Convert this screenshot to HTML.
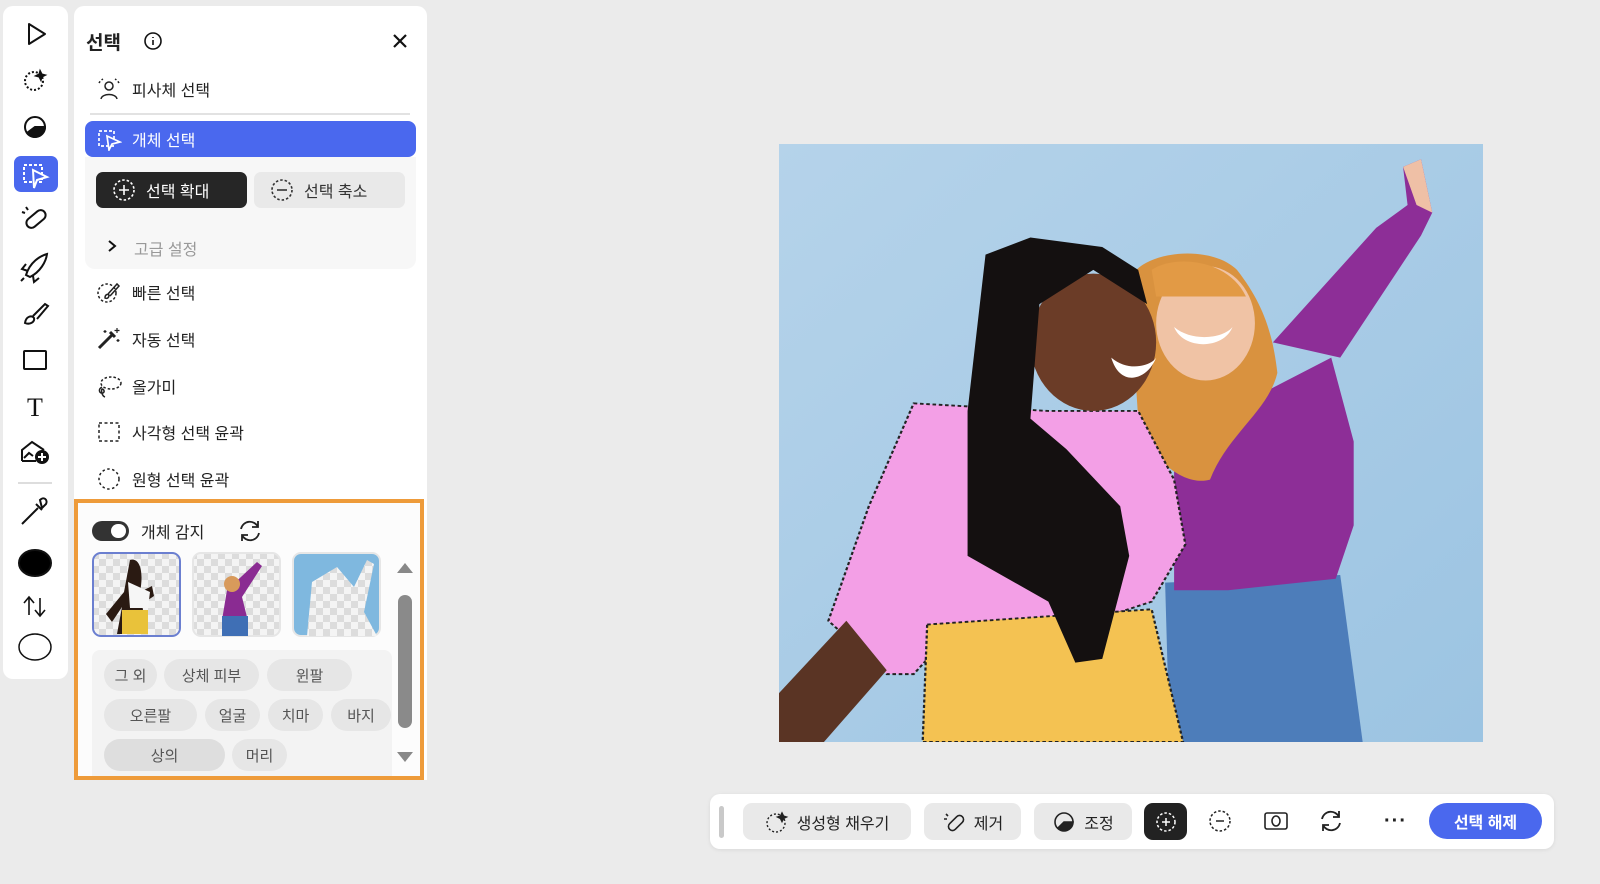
<!DOCTYPE html>
<html><head><meta charset="utf-8"><style>
*{box-sizing:border-box;margin:0;padding:0}
body{width:1600px;height:884px;background:#ebebeb;font-family:"Liberation Sans","Noto Sans CJK KR",sans-serif;position:relative;overflow:hidden;color:#222}
.abs{position:absolute}
.lt{left:3px;top:6px;width:65px;height:673px;background:#fff;border-radius:10px}
.ic{position:absolute;left:20px;width:30px;height:30px;display:flex;align-items:center;justify-content:center}
.panel{left:74px;top:6px;width:353px;height:774px;background:#fff;border-radius:10px 10px 0 0}
.row{position:absolute;left:96px;height:30px;display:flex;align-items:center;font-size:16px;color:#222}
.row svg{margin-right:10px}
.tag{position:absolute;height:32px;border-radius:16px;background:#e6e6e6;font-size:15px;color:#555;display:flex;align-items:center;justify-content:center}
.btn{position:absolute;top:803px;height:37px;border-radius:9px;background:#e9e9e9;display:flex;align-items:center;justify-content:center;font-size:16px;color:#222;gap:8px}
</style></head><body>

<div class="abs lt"></div>
<svg class="abs" style="left:0;top:0" width="74" height="680" fill="none" stroke="#111" stroke-width="2">
<path d="M29 24 L45 34 L29 44 Z" stroke-linejoin="round"/>
<circle cx="34" cy="81" r="9" stroke-dasharray="2 2"/><path d="M40 70 l2 4 4 1 -4 2 -1 4 -2-4 -4-1 4-2z" fill="#111" stroke-width="1"/>
<circle cx="35" cy="127" r="10"/><path d="M27 133 A10 10 0 0 0 45 127 L35 127 Z" fill="#111"/>
<rect x="14" y="156" width="44" height="36" rx="7" fill="#4a68ee" stroke="none"/>
<rect x="24" y="165" width="18" height="17" stroke="#fff" stroke-dasharray="3 2"/><path d="M33 170 L47 177 L37 180 L34 188 Z" stroke="#fff" fill="#4a68ee"/>
<rect x="25" y="214" width="22" height="10" rx="5" transform="rotate(-40 36 219)"/><path d="M26 207 l2 3 M22 212 l3 1"/>
<path d="M26 275 C30 262 40 256 47 254 C46 262 40 272 30 277 Z M28 271 l-6 -2 l4 -5 M33 276 l1 6 l5 -4 M24 278 l-3 3"/>
<path d="M25 323 C26 316 32 315 34 318 C35 322 30 325 25 323 Z M33 316 L45 304 L48 306 L37 319"/>
<rect x="24" y="351" width="22" height="18" rx="1"/>
<text x="35" y="416" font-family="Liberation Serif" font-size="26" fill="#111" stroke="none" text-anchor="middle">T</text>
<path d="M22 461 V450 L32 442 L44 450 M22 461 H36 M24 458 l5-5 4 3"/><circle cx="42" cy="457" r="6" fill="#111"/><path d="M42 453 v8 M38 457 h8" stroke="#fff"/>
<path d="M18 483 H52" stroke="#ddd"/>
<path d="M24 522 L38 508 M36 504 l6 6 M40 500 C44 496 48 500 46 504 L42 508 Z M24 522 l-2 2"/>
<ellipse cx="35" cy="563" rx="16" ry="13" fill="#000"/>
<path d="M29 615 V598 M24 603 L29 597 L34 603 M40 598 V615 M35 610 L40 616 L45 610" stroke-width="1.6"/>
<ellipse cx="35" cy="647" rx="16" ry="13" stroke-width="1.5"/>
</svg>

<div class="abs panel"></div>
<div class="abs" style="left:86px;top:28px;font-size:19px;font-weight:bold">선택</div>
<svg class="abs" style="left:143px;top:31px" width="20" height="20" fill="none" stroke="#111" stroke-width="1.6"><circle cx="10" cy="10" r="8"/><path d="M10 9 v5 M10 6 v1"/></svg>
<svg class="abs" style="left:392px;top:33px" width="16" height="16" stroke="#111" stroke-width="2.2"><path d="M2 2 L14 14 M14 2 L2 14"/></svg>

<div class="row" style="top:74px"><svg width="26" height="24" fill="none" stroke="#222" stroke-width="1.5"><circle cx="13" cy="9" r="4"/><path d="M5 22 C6 16 20 16 21 22" /><path d="M3 6 a11 11 0 0 1 4-4 M23 6 a11 11 0 0 0-4-4" stroke-dasharray="2 2"/></svg>피사체 선택</div>
<div class="abs" style="left:90px;top:113px;width:320px;height:2px;background:#e2e2e2"></div>
<div class="abs" style="left:85px;top:121px;width:331px;height:36px;background:#4a68ee;border-radius:8px"></div>
<div class="row" style="top:124px;color:#fff"><svg width="26" height="24" fill="none" stroke="#fff" stroke-width="1.7"><rect x="3" y="4" width="15" height="15" stroke-dasharray="3 2"/><path d="M11 9 L24 15 L16 17 L13 23 Z" fill="#4a68ee"/></svg>개체 선택</div>
<div class="abs" style="left:85px;top:157px;width:331px;height:112px;background:#f7f7f7;border-radius:0 0 10px 10px"></div>
<div class="abs" style="left:96px;top:172px;width:151px;height:36px;background:#262626;border-radius:7px;color:#fff;font-size:16px;display:flex;align-items:center;padding-left:16px;gap:10px"><svg width="24" height="24" fill="none" stroke="#fff" stroke-width="1.6"><circle cx="12" cy="12" r="10" stroke-dasharray="2.5 2"/><path d="M12 7 v10 M7 12 h10"/></svg>선택 확대</div>
<div class="abs" style="left:254px;top:172px;width:151px;height:36px;background:#e9e9e9;border-radius:7px;color:#333;font-size:16px;display:flex;align-items:center;padding-left:16px;gap:10px"><svg width="24" height="24" fill="none" stroke="#333" stroke-width="1.6"><circle cx="12" cy="12" r="10" stroke-dasharray="2.5 2"/><path d="M7 12 h10"/></svg>선택 축소</div>
<svg class="abs" style="left:106px;top:239px" width="12" height="14" fill="none" stroke="#111" stroke-width="2"><path d="M3 2 L9 7 L3 12"/></svg>
<div class="abs" style="left:134px;top:236px;font-size:16px;color:#999">고급 설정</div>

<div class="row" style="top:277px"><svg width="26" height="26" fill="none" stroke="#222" stroke-width="1.5"><circle cx="11" cy="14" r="9" stroke-dasharray="2.5 2"/><path d="M9 19 C9 15 12 15 13 16 C13 19 11 20 9 19 Z M12 15 L21 5 L23 7 L14 17"/></svg>빠른 선택</div>
<div class="row" style="top:324px"><svg width="26" height="26" fill="none" stroke="#222" stroke-width="1.6"><path d="M3 22 L17 8 M14 6 l5 5" stroke-width="3"/><path d="M21 2 v5 M18.5 4.5 h5 M9 4 v3 M7.5 5.5 h3 M22 13 v3 M20.5 14.5 h3" stroke-width="1.2"/></svg>자동 선택</div>
<div class="row" style="top:371px"><svg width="26" height="26" fill="none" stroke="#222" stroke-width="1.5"><ellipse cx="15" cy="10" rx="10" ry="6" stroke-dasharray="2.5 2"/><path d="M6 14 C2 16 3 21 7 20 C9 19 8 16 6 16 C5 18 6 23 9 24"/></svg>올가미</div>
<div class="row" style="top:417px"><svg width="26" height="24" fill="none" stroke="#222" stroke-width="1.5"><rect x="3" y="3" width="20" height="18" stroke-dasharray="3 2.5"/></svg>사각형 선택 윤곽</div>
<div class="row" style="top:464px"><svg width="26" height="26" fill="none" stroke="#222" stroke-width="1.5"><circle cx="13" cy="13" r="10" stroke-dasharray="2.5 2.5"/></svg>원형 선택 윤곽</div>

<div class="abs" style="left:74px;top:499px;width:350px;height:281px;border:4px solid #ee9b3a;background:#fcfcfc"></div>
<div class="abs" style="left:92px;top:521px;width:37px;height:20px;border-radius:10px;background:#333"></div>
<div class="abs" style="left:111px;top:524px;width:15px;height:14px;border-radius:7px;background:#fff"></div>
<div class="abs" style="left:141px;top:519px;font-size:16px;color:#222">개체 감지</div>
<svg class="abs" style="left:236px;top:518px" width="28" height="26" fill="none" stroke="#222" stroke-width="1.8"><path d="M5 11 A9 9 0 0 1 22 9 M22 3 v6 h-6 M23 15 A9 9 0 0 1 6 17 M6 23 v-6 h6"/></svg>
<svg class="abs" style="left:92px;top:552px" width="290" height="86">
<defs><pattern id="ck" width="14" height="14" patternUnits="userSpaceOnUse"><rect width="14" height="14" fill="#f4f4f4"/><rect width="7" height="7" fill="#dcdcdc"/><rect x="7" y="7" width="7" height="7" fill="#dcdcdc"/></pattern></defs>
<rect x="1" y="1" width="87" height="83" rx="8" fill="url(#ck)" stroke="#6b7fd0" stroke-width="2"/>
<path d="M38 8 C48 5 52 20 48 40 L60 34 L62 44 L50 52 L55 82 L25 82 L30 55 L20 70 L14 62 L32 40 Z" fill="#2a1a12"/><rect x="30" y="58" width="26" height="24" fill="#e9c23a"/><path d="M36 30 L58 40 L56 56 L38 56Z" fill="#f6f6f6"/>
<rect x="101" y="1" width="87" height="83" rx="8" fill="url(#ck)" stroke="#e6e6e6" stroke-width="2"/>
<path d="M135 38 L165 10 L170 14 L150 45 L155 65 L130 68 Z" fill="#8a2b92"/><circle cx="140" cy="32" r="8" fill="#d89a5b"/><rect x="130" y="64" width="26" height="20" fill="#3f6fb5"/>
<rect x="201" y="1" width="87" height="83" rx="8" fill="#7fb8df" stroke="#e6e6e6" stroke-width="2"/>
<path d="M215 84 L220 30 L245 15 L262 35 L275 8 L282 12 L272 60 L285 84Z" fill="url(#ck)"/>
</svg>
<div class="abs" style="left:397px;top:563px;width:0;height:0;border-left:8px solid transparent;border-right:8px solid transparent;border-bottom:10px solid #888"></div>
<div class="abs" style="left:398px;top:595px;width:14px;height:133px;border-radius:7px;background:#8a8a8a"></div>
<div class="abs" style="left:397px;top:752px;width:0;height:0;border-left:8px solid transparent;border-right:8px solid transparent;border-top:10px solid #888"></div>
<div class="abs" style="left:92px;top:650px;width:300px;height:126px;background:#f3f3f3;border-radius:8px 8px 0 0"></div>
<div class="tag" style="left:104px;top:659px;width:53px">그 외</div>
<div class="tag" style="left:164px;top:659px;width:95px">상체 피부</div>
<div class="tag" style="left:267px;top:659px;width:85px">윈팔</div>
<div class="tag" style="left:104px;top:699px;width:93px">오른팔</div>
<div class="tag" style="left:205px;top:699px;width:55px">얼굴</div>
<div class="tag" style="left:268px;top:699px;width:55px">치마</div>
<div class="tag" style="left:331px;top:699px;width:60px">바지</div>
<div class="tag" style="left:104px;top:739px;width:121px;background:#dedede">상의</div>
<div class="tag" style="left:232px;top:739px;width:55px">머리</div>

<svg class="abs" style="left:779px;top:144px" width="704" height="598" viewBox="0 0 1568 1568" preserveAspectRatio="none">
<defs><linearGradient id="bg" x1="0" y1="0" x2="1" y2="1"><stop offset="0" stop-color="#b5d3ea"/><stop offset="1" stop-color="#9cc4e2"/></linearGradient></defs>
<rect width="1568" height="1568" fill="url(#bg)"/>
<path d="M1100 520 L1330 220 L1400 160 L1390 60 L1430 40 L1455 180 L1430 240 L1250 560 Z" fill="#8d2e97"/>
<path d="M1390 60 L1430 40 L1455 180 L1420 160 Z" fill="#efc0a6"/>
<path d="M860 1150 L1250 1130 L1300 1568 L870 1568 Z" fill="#4d7dba"/>
<path d="M880 760 L1000 700 L1230 560 L1280 780 L1280 1000 L1240 1140 L1000 1170 L880 1170 Z" fill="#8d2e97"/>
<path d="M780 360 C800 280 960 260 1020 330 C1080 420 1100 500 1110 600 C1090 700 1000 760 960 880 C900 900 820 820 800 720 Z" fill="#d9923f"/>
<ellipse cx="950" cy="470" rx="110" ry="150" fill="#f0c3a5"/>
<path d="M830 330 C880 290 1000 300 1040 400 L840 400 Z" fill="#e29a45"/>
<path d="M300 680 L600 700 L800 700 L880 880 L905 1050 L830 1200 L700 1250 L400 1260 L300 1390 L240 1390 L110 1250 L200 950 Z" fill="#f39fe6" stroke="#222" stroke-width="5" stroke-dasharray="8 6"/>
<path d="M0 1440 L150 1250 L240 1380 L100 1568 L0 1568 Z" fill="#5a3424"/>
<path d="M330 1260 L830 1220 L900 1568 L320 1568 Z" fill="#f4c252" stroke="#222" stroke-width="5" stroke-dasharray="8 6"/>
<ellipse cx="700" cy="520" rx="140" ry="180" fill="#6b3c27"/>
<path d="M460 290 L560 245 L720 270 L800 330 L820 420 L700 330 L580 420 L560 720 L640 800 L760 950 L780 1080 L720 1350 L660 1360 L600 1200 L420 1080 L420 700 Z" fill="#141010"/>
<path d="M740 560 C780 600 830 580 840 560 C820 620 760 640 740 560 Z" fill="#fff"/>
<path d="M880 480 C920 520 990 510 1010 480 C990 540 900 540 880 480 Z" fill="#fff"/>
</svg>

<div class="abs" style="left:710px;top:794px;width:844px;height:55px;background:#fff;border-radius:10px;box-shadow:0 1px 4px rgba(0,0,0,.08)"></div>
<div class="abs" style="left:719px;top:806px;width:5px;height:32px;background:#c9c9c9;border-radius:3px"></div>
<div class="btn" style="left:743px;width:168px"><svg width="24" height="24" fill="none" stroke="#222" stroke-width="1.4"><circle cx="11" cy="13" r="9" stroke-dasharray="2 2"/><path d="M17 3 l1.5 3 3 1 -3 1.5 -1.5 3 -1.5-3 -3-1.5 3-1z" fill="#222"/></svg>생성형 채우기</div>
<div class="btn" style="left:924px;width:97px"><svg width="24" height="24" fill="none" stroke="#222" stroke-width="1.6"><rect x="5" y="9" width="18" height="8" rx="4" transform="rotate(-45 14 13)"/><path d="M4 4 l2 2 M2 9 h3"/></svg>제거</div>
<div class="btn" style="left:1034px;width:98px"><svg width="24" height="24" fill="none" stroke="#222" stroke-width="1.6"><circle cx="12" cy="12" r="9"/><path d="M6 18 A9 9 0 0 0 21 12 L12 12 Z" fill="#222"/></svg>조정</div>
<div class="btn" style="left:1144px;width:43px;background:#222"><svg width="24" height="24" fill="none" stroke="#fff" stroke-width="1.5"><circle cx="12" cy="12" r="9" stroke-dasharray="2.5 2"/><path d="M12 8 v8 M8 12 h8"/></svg></div>
<svg class="abs" style="left:1208px;top:809px" width="24" height="24" fill="none" stroke="#222" stroke-width="1.5"><circle cx="12" cy="12" r="10" stroke-dasharray="2.5 2"/><path d="M8 12 h8"/></svg>
<svg class="abs" style="left:1263px;top:810px" width="26" height="22" fill="none" stroke="#222" stroke-width="1.6"><rect x="2" y="3" width="22" height="16" rx="2"/><ellipse cx="13" cy="11" rx="4" ry="5"/></svg>
<svg class="abs" style="left:1317px;top:808px" width="28" height="26" fill="none" stroke="#222" stroke-width="1.8"><path d="M5 11 A9 9 0 0 1 22 9 M22 3 v6 h-6 M23 15 A9 9 0 0 1 6 17 M6 23 v-6 h6"/></svg>
<div class="abs" style="left:1384px;top:810px;font-size:20px;font-weight:bold;letter-spacing:1px">···</div>
<div class="abs" style="left:1429px;top:803px;width:113px;height:36px;border-radius:18px;background:#4a68ee;color:#fff;font-size:16px;font-weight:bold;display:flex;align-items:center;justify-content:center">선택 해제</div>
</body></html>
